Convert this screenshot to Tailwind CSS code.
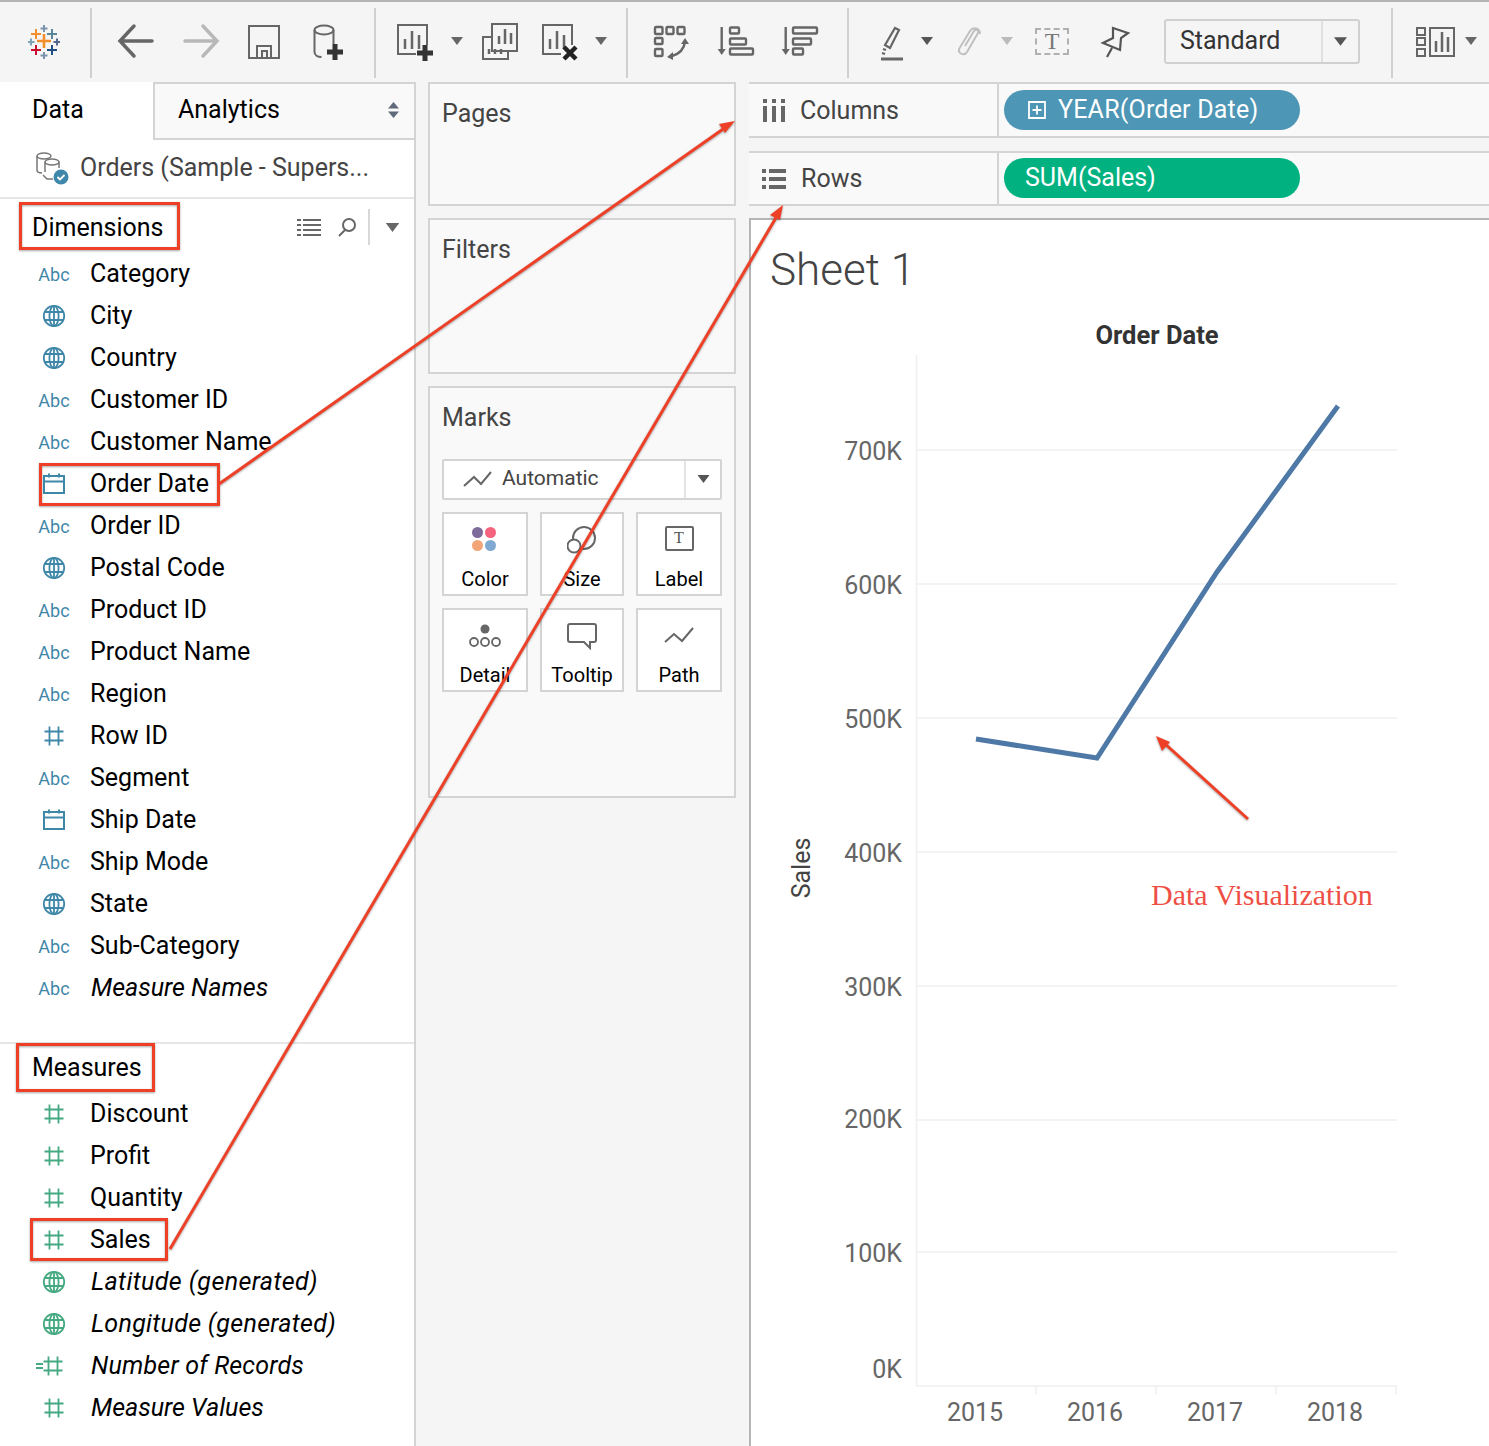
<!DOCTYPE html>
<html lang="en">
<head>
  <meta charset="UTF-8" />
  <title>Tableau - Sheet 1</title>
  <script src="https://cdn.jsdelivr.net/npm/@tailwindcss/browser@4"></script>
</head>
<body class="bg-[#f5f5f5] font-['Roboto',sans-serif] text-[25px] text-[#1a1a1a]">
  <svg class="hidden">
    <symbol id="globe" viewBox="0 0 24 24"><g fill="none" stroke="currentColor" stroke-width="1.800"><circle cx="12" cy="12" r="10.200"/><ellipse cx="12" cy="12" rx="4.600" ry="10.200"/><path d="M2.600 8h18.800M2.600 16h18.800M12 2v20"/></g></symbol>
    <symbol id="hash" viewBox="0 0 24 24"><path d="M7.500 2.500v19M16.500 2.500v19M2.500 7.500h19M2.500 16.500h19" fill="none" stroke="currentColor" stroke-width="1.800"/></symbol>
    <symbol id="cal" viewBox="0 0 24 24"><g fill="none" stroke="currentColor" stroke-width="2"><rect x="2" y="4" width="20" height="17"/><path d="M2 9.500h20M7 1.500v4M17 1.500v4"/></g></symbol>
    <symbol id="caret" viewBox="0 0 12 8"><path d="M0 0h12L6 8z" fill="currentColor"/></symbol>
  </svg>

  <div class="relative w-[1489px] h-[1446px] overflow-hidden">
    <!-- Toolbar -->
    <div class="h-[82px] pb-[2px] border-t-2 border-[#b5b5b5] flex items-center text-[#666]">
      <svg class="ml-[28px] w-[32px] h-[40px]" viewBox="28 21 32 40" fill="none" stroke-width="2">
        <path d="M44 34v14M37 41h14" stroke="#f28e2b" stroke-width="2.600"/>
        <path d="M36 29v10M31 34h10" stroke="#f28e2b"/>
        <path d="M52 29v10M47 34h10" stroke="#59879b"/>
        <path d="M36 45v10M31 50h10" stroke="#c8102e"/>
        <path d="M52 45v10M47 50h10" stroke="#1f4e84"/>
        <path d="M44 25v7M40.500 28.500h7M44 52v7M40.500 55.500h7" stroke="#7c93ad"/>
        <path d="M31 38.500v7M27.500 42h7" stroke="#7fa2b5"/>
        <path d="M57 38.500v7M53.500 42h7" stroke="#54688f"/>
      </svg>
      <div class="ml-[30px] mt-[4px] w-[2px] h-[70px] bg-[#d0d0d0]"></div>
      <svg class="ml-[25px] w-[38px] h-[40px]" viewBox="0 0 38 40" fill="none" stroke="#666" stroke-width="3.500" stroke-linecap="round"><path d="M35 20H3M17 5L3 20l14 15"/></svg>
      <svg class="ml-[27px] w-[38px] h-[40px]" viewBox="0 0 38 40" fill="none" stroke="#b8b8b8" stroke-width="3.500" stroke-linecap="round"><path d="M3 20h32M21 5l14 15-14 15"/></svg>
      <svg class="ml-[26px] w-[36px] h-[40px]" viewBox="0 0 36 40" fill="none" stroke="#666" stroke-width="2"><path d="M3 5h30v32H3zM11 37V25h14v12M16 37v-7h5v7"/></svg>
      <svg class="ml-[30px] w-[34px] h-[40px]" viewBox="0 0 34 40" fill="none" stroke="#666" stroke-width="2"><ellipse cx="12" cy="9" rx="9.500" ry="4.500"/><path d="M2.500 9v22c0 3 3 5 7 5M21.500 9v14"/><path d="M23 23v16M15 31h16" stroke="#333" stroke-width="5"/></svg>
      <div class="ml-[28px] mt-[4px] w-[2px] h-[70px] bg-[#d0d0d0]"></div>
      <svg class="ml-[20px] w-[40px] h-[40px]" viewBox="0 0 40 40" fill="none" stroke="#666" stroke-width="2"><path d="M20 33H2V4h29v20"/><path d="M9 28V18M16 28V10M23 28V14" stroke-width="2.500"/><path d="M29 24v16M21 32h16" stroke="#333" stroke-width="5"/></svg>
      <svg class="ml-[15px] w-[12px] h-[8px] text-[#666]"><use href="#caret"/></svg>
      <svg class="ml-[18px] w-[38px] h-[40px]" viewBox="0 0 38 40" fill="none" stroke="#666" stroke-width="2"><path d="M11 3h25v27H11z"/><path d="M11 16H2v22h25v-8"/><path d="M18 23v-8M24 23V8M30 23V12M8 33v-5M14 33v-5M20 33v-5" stroke-width="2.500"/></svg>
      <svg class="ml-[22px] w-[40px] h-[40px]" viewBox="0 0 40 40" fill="none" stroke="#666" stroke-width="2"><path d="M20 33H2V4h29v20"/><path d="M9 28V18M16 28V10M23 28V14" stroke-width="2.500"/><path d="M23 26l12 12M35 26L23 38" stroke="#222" stroke-width="4.500"/></svg>
      <svg class="ml-[14px] w-[12px] h-[8px] text-[#666]"><use href="#caret"/></svg>
      <div class="ml-[19px] mt-[4px] w-[2px] h-[70px] bg-[#d0d0d0]"></div>
      <svg class="ml-[25px] w-[38px] h-[40px]" viewBox="0 0 38 40" fill="none" stroke="#666" stroke-width="2.400"><rect x="2" y="6" width="7.500" height="7" rx="1"/><rect x="13.500" y="6" width="7" height="7" rx="1"/><rect x="24.500" y="6" width="7" height="7" rx="1"/><rect x="2" y="17" width="7.500" height="6" rx="1"/><rect x="2" y="28" width="7.500" height="7" rx="1"/><path d="M32 21C31 28 26 33 19 35"/><path d="M32 17l4 6h-8zM14 36l6-5v8z" fill="#666" stroke="none"/></svg>
      <svg class="ml-[26px] w-[38px] h-[40px]" viewBox="0 0 38 40" fill="none" stroke="#666" stroke-width="2.400"><path d="M4.700 6v24"/><path d="M.7 28h8l-4 6z" fill="#666" stroke="none"/><rect x="13" y="6.500" width="9" height="6" rx="1"/><rect x="13" y="17.500" width="16" height="6" rx="1"/><rect x="13" y="27.500" width="23" height="6" rx="1"/></svg>
      <svg class="ml-[26px] w-[38px] h-[40px]" viewBox="0 0 38 40" fill="none" stroke="#666" stroke-width="2.400"><path d="M4.700 6v24"/><path d="M.7 28h8l-4 6z" fill="#666" stroke="none"/><rect x="12" y="6.500" width="24" height="6" rx="1"/><rect x="12" y="17.500" width="18" height="6" rx="1"/><rect x="12" y="27.500" width="10" height="6" rx="1"/></svg>
      <div class="ml-[28px] mt-[4px] w-[2px] h-[70px] bg-[#d0d0d0]"></div>
      <svg class="ml-[30px] w-[28px] h-[40px]" viewBox="0 0 28 40" fill="none" stroke="#666" stroke-width="2.200"><path d="M16 7l4 2-9 18-5-3zM7 29l-3-1M6 33l-3-1"/><path d="M2 38h22" stroke-width="3"/></svg>
      <svg class="ml-[14px] w-[12px] h-[8px] text-[#555]"><use href="#caret"/></svg>
      <svg class="ml-[23px] w-[28px] h-[40px]" viewBox="0 0 28 40" fill="none" stroke="#c0c0c0" stroke-width="2"><path d="M9 25L18 10c1.500-2.500 5-1 4 2L11 31c-2.500 4-9 2-8-3L14 10c3-4.500 10-3 10 3"/></svg>
      <svg class="ml-[17px] w-[12px] h-[8px] text-[#bbb]"><use href="#caret"/></svg>
      <div class="ml-[21px] w-[36px] h-[40px] flex items-center justify-center"><div class="w-[34px] h-[27px] border-2 border-dashed border-[#b0b0b0] flex items-center justify-center font-['Liberation_Serif',serif] text-[24px] leading-none text-[#777]">T</div></div>
      <svg class="ml-[29px] w-[32px] h-[40px]" viewBox="0 0 32 40" fill="none" stroke="#555" stroke-width="2.200"><path d="M14 7L29 12l-7 5-1 12L4 22l10-5zM13 27l-5 9"/></svg>
      <div class="ml-[33px] w-[196px] h-[45px] border-2 border-[#d0d0d0] rounded-[3px] flex items-center">
        <span class="ml-[14px] flex-1 text-[#333]">Standard</span>
        <div class="w-[37px] h-full border-l-2 border-[#e0e0e0] flex items-center justify-center"><svg class="w-[13px] h-[9px] text-[#555]"><use href="#caret"/></svg></div>
      </div>
      <div class="ml-[31px] mt-[4px] w-[2px] h-[70px] bg-[#d0d0d0]"></div>
      <svg class="ml-[22px] w-[41px] h-[40px]" viewBox="0 0 41 40" fill="none" stroke="#666" stroke-width="2"><path d="M2 7h8v7H2zM2 17h8v7H2zM2 28h8v7H2zM15 7h24v28H15z"/><path d="M21 31V20M27 31V11M33 31V16" stroke-width="2.500"/></svg>
      <svg class="ml-[9px] w-[12px] h-[8px] text-[#666]"><use href="#caret"/></svg>
    </div>

    <div class="flex h-[1364px]">
      <!-- Data pane -->
      <div class="w-[416px] shrink-0 bg-white border-r-2 border-[#d4d4d4]">
        <div class="flex h-[58px]">
          <div class="w-[153px] pl-[32px] pb-[2px] flex items-center text-black">Data</div>
          <div class="flex-1 pl-[23px] pr-[15px] pb-[2px] flex items-center justify-between bg-[#f9f9f9] border-l-2 border-t-2 border-b-2 border-[#d4d4d4]">
            <span class="text-black">Analytics</span>
            <svg class="w-[11px] h-[16px]" viewBox="0 0 11 16" fill="#5f6b7a"><path d="M5.500 0L11 6.500H0zM5.500 16L0 9.500h11z"/></svg>
          </div>
        </div>
        <div class="h-[59px] pb-[2px] flex items-center pl-[35px] border-b-2 border-[#e6e6e6] text-[#444]">
          <svg class="w-[34px] h-[34px]" viewBox="0 0 34 34" fill="none" stroke="#777" stroke-width="1.500"><ellipse cx="9" cy="5" rx="7" ry="3"/><path d="M2 5v14c0 2 2 3 5 3"/><ellipse cx="17" cy="11" rx="7" ry="3" fill="#fff"/><path d="M10 11v10M24 11v6M8 24l4 4h6"/><circle cx="26" cy="26" r="7.500" fill="#3f88ab" stroke="none"/><path d="M22.500 26l2.500 2.500 4.500-4.500" stroke="#fff" stroke-width="1.800"/></svg>
          <span class="ml-[11px]">Orders (Sample - Supers...</span>
        </div>
        <div class="h-[54px] pt-[2px] flex items-center pl-[32px] pr-[14px]">
          <span class="flex-1 text-black mt-[2px]">Dimensions</span>
          <svg class="w-[24px] h-[18px]" viewBox="0 0 24 18" stroke="#666" stroke-width="2" fill="none"><path d="M0 2h4M6 2h18M0 7h4M6 7h18M0 12h4M6 12h18M0 17h4M6 17h18"/></svg>
          <svg class="ml-[16px] w-[20px] h-[20px]" viewBox="0 0 20 20" fill="none" stroke="#666" stroke-width="2"><circle cx="12" cy="8" r="6"/><path d="M8 13l-6 6"/></svg>
          <div class="ml-[11px] w-[2px] h-[36px] bg-[#d8d8d8]"></div>
          <svg class="ml-[15px] w-[15px] h-[9px] text-[#666]"><use href="#caret"/></svg>
        </div>

        <!-- Dimensions -->
        <div class="text-[#3f87a9]">
          <div class="h-[42px] flex items-center pl-[38px]"><span class="w-[32px] text-center text-[18px]">Abc</span><span class="ml-[20px] text-black">Category</span></div>
          <div class="h-[42px] flex items-center pl-[38px]"><svg class="mx-[4px] w-[24px] h-[24px]"><use href="#globe"/></svg><span class="ml-[20px] text-black">City</span></div>
          <div class="h-[42px] flex items-center pl-[38px]"><svg class="mx-[4px] w-[24px] h-[24px]"><use href="#globe"/></svg><span class="ml-[20px] text-black">Country</span></div>
          <div class="h-[42px] flex items-center pl-[38px]"><span class="w-[32px] text-center text-[18px]">Abc</span><span class="ml-[20px] text-black">Customer ID</span></div>
          <div class="h-[42px] flex items-center pl-[38px]"><span class="w-[32px] text-center text-[18px]">Abc</span><span class="ml-[20px] text-black">Customer Name</span></div>
          <div class="h-[42px] flex items-center pl-[38px]"><svg class="mx-[4px] w-[24px] h-[24px]"><use href="#cal"/></svg><span class="ml-[20px] text-black">Order Date</span></div>
          <div class="h-[42px] flex items-center pl-[38px]"><span class="w-[32px] text-center text-[18px]">Abc</span><span class="ml-[20px] text-black">Order ID</span></div>
          <div class="h-[42px] flex items-center pl-[38px]"><svg class="mx-[4px] w-[24px] h-[24px]"><use href="#globe"/></svg><span class="ml-[20px] text-black">Postal Code</span></div>
          <div class="h-[42px] flex items-center pl-[38px]"><span class="w-[32px] text-center text-[18px]">Abc</span><span class="ml-[20px] text-black">Product ID</span></div>
          <div class="h-[42px] flex items-center pl-[38px]"><span class="w-[32px] text-center text-[18px]">Abc</span><span class="ml-[20px] text-black">Product Name</span></div>
          <div class="h-[42px] flex items-center pl-[38px]"><span class="w-[32px] text-center text-[18px]">Abc</span><span class="ml-[20px] text-black">Region</span></div>
          <div class="h-[42px] flex items-center pl-[38px]"><svg class="mx-[4px] w-[24px] h-[24px]"><use href="#hash"/></svg><span class="ml-[20px] text-black">Row ID</span></div>
          <div class="h-[42px] flex items-center pl-[38px]"><span class="w-[32px] text-center text-[18px]">Abc</span><span class="ml-[20px] text-black">Segment</span></div>
          <div class="h-[42px] flex items-center pl-[38px]"><svg class="mx-[4px] w-[24px] h-[24px]"><use href="#cal"/></svg><span class="ml-[20px] text-black">Ship Date</span></div>
          <div class="h-[42px] flex items-center pl-[38px]"><span class="w-[32px] text-center text-[18px]">Abc</span><span class="ml-[20px] text-black">Ship Mode</span></div>
          <div class="h-[42px] flex items-center pl-[38px]"><svg class="mx-[4px] w-[24px] h-[24px]"><use href="#globe"/></svg><span class="ml-[20px] text-black">State</span></div>
          <div class="h-[42px] flex items-center pl-[38px]"><span class="w-[32px] text-center text-[18px]">Abc</span><span class="ml-[20px] text-black">Sub-Category</span></div>
          <div class="h-[42px] flex items-center pl-[38px]"><span class="w-[32px] text-center text-[18px]">Abc</span><span class="ml-[21px] text-black italic">Measure Names</span></div>
        </div>

        <!-- Measures -->
        <div class="mt-[33px] border-t-2 border-[#e6e6e6] h-[51px] pb-[2px] flex items-center pl-[32px] text-black">Measures</div>
        <div class="text-[#45a981]">
          <div class="h-[42px] flex items-center pl-[38px]"><svg class="mx-[4px] w-[24px] h-[24px]"><use href="#hash"/></svg><span class="ml-[20px] text-black">Discount</span></div>
          <div class="h-[42px] flex items-center pl-[38px]"><svg class="mx-[4px] w-[24px] h-[24px]"><use href="#hash"/></svg><span class="ml-[20px] text-black">Profit</span></div>
          <div class="h-[42px] flex items-center pl-[38px]"><svg class="mx-[4px] w-[24px] h-[24px]"><use href="#hash"/></svg><span class="ml-[20px] text-black">Quantity</span></div>
          <div class="h-[42px] flex items-center pl-[38px]"><svg class="mx-[4px] w-[24px] h-[24px]"><use href="#hash"/></svg><span class="ml-[20px] text-black">Sales</span></div>
          <div class="h-[42px] flex items-center pl-[38px]"><svg class="mx-[4px] w-[24px] h-[24px]"><use href="#globe"/></svg><span class="ml-[21px] text-black italic tracking-[0.4px]">Latitude (generated)</span></div>
          <div class="h-[42px] flex items-center pl-[38px]"><svg class="mx-[4px] w-[24px] h-[24px]"><use href="#globe"/></svg><span class="ml-[21px] text-black italic tracking-[0.3px]">Longitude (generated)</span></div>
          <div class="h-[42px] flex items-center pl-[38px]"><svg class="w-[32px] h-[24px] overflow-visible" viewBox="0 0 32 24" fill="none" stroke="currentColor" stroke-width="1.800"><path d="M10.500 2.500v19M19.500 2.500v19M5.500 7.500h19M5.500 16.500h19M-2 10h7M-2 14h7"/></svg><span class="ml-[21px] text-black italic tracking-[0.2px]">Number of Records</span></div>
          <div class="h-[42px] flex items-center pl-[38px]"><svg class="mx-[4px] w-[24px] h-[24px]"><use href="#hash"/></svg><span class="ml-[21px] text-black italic">Measure Values</span></div>
        </div>
      </div>

      <!-- Cards column -->
      <div class="w-[333px] shrink-0 pl-[12px] pr-[13px] flex flex-col gap-[12px] text-[#444]">
        <div class="h-[124px] bg-[#f9f9f9] border-2 border-[#d4d4d4] pl-[12px] pt-[11px]">Pages</div>
        <div class="h-[156px] bg-[#f9f9f9] border-2 border-[#d4d4d4] pl-[12px] pt-[11px]">Filters</div>
        <div class="h-[412px] bg-[#f9f9f9] border-2 border-[#d4d4d4] pl-[12px] pt-[11px]">
          <div>Marks</div>
          <div class="mt-[22px] w-[280px] h-[41px] bg-white border-2 border-[#d4d4d4] rounded-[2px] flex items-center text-[21px]">
            <svg class="ml-[19px] w-[29px] h-[18px]" viewBox="0 0 29 18" fill="none" stroke="#666" stroke-width="2"><path d="M1 16L11 7l7 7L28 2"/></svg>
            <span class="ml-[10px] flex-1">Automatic</span>
            <div class="w-[36px] h-full border-l-2 border-[#e4e4e4] flex items-center justify-center"><svg class="w-[13px] h-[8px] text-[#555]"><use href="#caret"/></svg></div>
          </div>
          <div class="mt-[12px] grid grid-cols-[86px_84px_86px] gap-x-[12px] gap-y-[12px] text-[20px] text-black w-[280px]">
            <div class="h-[84px] bg-white border-2 border-[#d4d4d4] flex flex-col items-center">
              <svg class="mt-[12px] -ml-[2px] w-[26px] h-[26px]" viewBox="0 0 26 26"><circle cx="6.500" cy="6.500" r="5.500" fill="#7f6a9c"/><circle cx="19.500" cy="6.500" r="5.500" fill="#f5637e"/><circle cx="6.500" cy="19.500" r="5.500" fill="#f2a678"/><circle cx="19.500" cy="19.500" r="5.500" fill="#7fa9d2"/></svg>
              <span class="mt-[12px]">Color</span>
            </div>
            <div class="h-[84px] bg-white border-2 border-[#d4d4d4] flex flex-col items-center">
              <svg class="mt-[12px] w-[30px] h-[28px]" viewBox="0 0 30 28" fill="none" stroke="#666" stroke-width="2"><circle cx="17" cy="12" r="11"/><circle cx="7" cy="20" r="6.500" fill="#fff"/></svg>
              <span class="mt-[10px]">Size</span>
            </div>
            <div class="h-[84px] bg-white border-2 border-[#d4d4d4] flex flex-col items-center">
              <div class="mt-[12px] w-[29px] h-[25px] border-2 border-[#666] rounded-[2px] flex items-center justify-center font-['Liberation_Serif',serif] text-[16px] leading-none text-[#555]">T</div>
              <span class="mt-[13px]">Label</span>
            </div>
            <div class="h-[84px] bg-white border-2 border-[#d4d4d4] flex flex-col items-center">
              <svg class="mt-[14px] w-[32px] h-[24px]" viewBox="0 0 32 24" fill="none" stroke="#666" stroke-width="1.800"><circle cx="16" cy="5" r="4.500" fill="#666" stroke="none"/><circle cx="5" cy="18" r="4"/><circle cx="16" cy="18" r="4"/><circle cx="27" cy="18" r="4"/></svg>
              <span class="mt-[12px]">Detail</span>
            </div>
            <div class="h-[84px] bg-white border-2 border-[#d4d4d4] flex flex-col items-center">
              <svg class="mt-[12px] w-[30px] h-[28px]" viewBox="0 0 30 28" fill="none" stroke="#666" stroke-width="2"><path d="M3 2h24a2 2 0 012 2v14a2 2 0 01-2 2h-4v6l-6-6H3a2 2 0 01-2-2V4a2 2 0 012-2z"/></svg>
              <span class="mt-[10px]">Tooltip</span>
            </div>
            <div class="h-[84px] bg-white border-2 border-[#d4d4d4] flex flex-col items-center">
              <svg class="mt-[16px] w-[30px] h-[20px]" viewBox="0 0 30 20" fill="none" stroke="#666" stroke-width="2"><path d="M1 16L10 8l8 7L29 2"/></svg>
              <span class="mt-[14px]">Path</span>
            </div>
          </div>
        </div>
      </div>

      <!-- Shelves and view -->
      <div class="flex-1 flex flex-col min-w-0">
        <div class="h-[56px] flex bg-[#f9f9f9] border-t-2 border-b-2 border-[#d4d4d4] text-[#444]">
          <div class="w-[250px] pl-[14px] pt-[1px] flex items-center border-r-2 border-[#d4d4d4]">
            <svg class="w-[22px] h-[24px]" viewBox="0 0 22 24" fill="#666"><path d="M0 0h4v4H0zM9 0h4v4H9zM18 0h4v4h-4zM0 7h4v16H0zM9 7h4v16H9zM18 7h4v16h-4z"/></svg>
            <span class="ml-[15px]">Columns</span>
          </div>
          <div class="pl-[5px] flex items-center">
            <div class="w-[296px] h-[40px] rounded-full bg-[#4e96b5] text-white flex items-center pl-[24px]">
              <svg class="w-[18px] h-[18px]" viewBox="0 0 18 18" fill="none" stroke="#fff" stroke-width="1.800"><path d="M1 1h16v16H1zM9 4.500v9M4.500 9h9"/></svg>
              <span class="ml-[12px] tracking-[0.2px]">YEAR(Order Date)</span>
            </div>
          </div>
        </div>
        <div class="mt-[13px] h-[55px] flex bg-[#f9f9f9] border-t-2 border-b-2 border-[#d4d4d4] text-[#444]">
          <div class="w-[250px] pl-[13px] flex items-center border-r-2 border-[#d4d4d4]">
            <svg class="w-[24px] h-[20px]" viewBox="0 0 24 20" fill="#666"><path d="M0 0h4v4H0zM7 0h17v4H7zM0 8h4v4H0zM7 8h17v4H7zM0 16h4v4H0zM7 16h17v4H7z"/></svg>
            <span class="ml-[15px]">Rows</span>
          </div>
          <div class="pl-[5px] pb-[1px] flex items-center">
            <div class="w-[296px] h-[40px] rounded-full bg-[#02b180] text-white flex items-center pl-[21px]">SUM(Sales)</div>
          </div>
        </div>

        <!-- View -->
        <div class="mt-[12px] flex-1 relative bg-white border-t-2 border-l-2 border-[#b5b5b5]">
          <div class="pl-[19px] pt-[24px] text-[44px] leading-[52px] font-light text-[#444]">Sheet 1</div>
          <svg class="absolute left-0 top-0 w-[738px] h-[1226px]" viewBox="751 220 738 1226">
            <g stroke="#efefef" stroke-width="1.500" fill="none">
              <path d="M916.500 355V1386M916 450h481M916 584h481M916 718h481M916 852h481M916 986h481M916 1120h481M916 1252h481M916 1386h481"/>
              <path d="M1036 1386v8M1156 1386v8M1276 1386v8M1396 1386v8"/>
            </g>
            <path d="M976 739L1097 758L1217 572L1338 406" fill="none" stroke="#4e79a7" stroke-width="5"/>
            <g font-family="Roboto, sans-serif" font-size="25" fill="#666">
              <g text-anchor="end">
                <text x="902" y="460">700K</text><text x="902" y="594">600K</text><text x="902" y="728">500K</text><text x="902" y="862">400K</text><text x="902" y="996">300K</text><text x="902" y="1128">200K</text><text x="902" y="1262">100K</text><text x="902" y="1378">0K</text>
              </g>
              <g text-anchor="middle">
                <text x="975" y="1421">2015</text><text x="1095" y="1421">2016</text><text x="1215" y="1421">2017</text><text x="1335" y="1421">2018</text>
                <text x="1157" y="344" font-weight="700" font-size="25.500" fill="#333">Order Date</text>
                <text transform="translate(810 868) rotate(-90)" fill="#444">Sales</text>
              </g>
            </g>
          </svg>
        </div>
      </div>
    </div>

    <!-- Annotations on top of the screenshot -->
    <svg class="absolute left-0 top-0 w-[1489px] h-[1446px] pointer-events-none drop-shadow-[0_1px_1px_rgba(0,0,0,0.35)]" viewBox="0 0 1489 1446" fill="none" stroke="#ee4027" stroke-width="3">
      <rect x="20.500" y="203.500" width="158" height="45"/>
      <rect x="40.500" y="464.500" width="178" height="40"/>
      <rect x="17.500" y="1044.500" width="136" height="46"/>
      <rect x="31.500" y="1219.500" width="135" height="40"/>
      <path d="M219 484L726 127"/>
      <path d="M735 121l-16 3 6 9z" fill="#ee4027" stroke="none"/>
      <path d="M170 1249L777 216"/>
      <path d="M783 205l-13 10 10 5z" fill="#ee4027" stroke="none"/>
      <path d="M1248 819L1163 742"/>
      <path d="M1156 736l6 15 8-9z" fill="#ee4027" stroke="none"/>
    </svg>
    <span class="absolute left-[1151px] top-[877px] font-['Liberation_Serif',serif] text-[30px] leading-[36px] text-[#ee4f45]">Data Visualization</span>
  </div>
</body>
</html>
